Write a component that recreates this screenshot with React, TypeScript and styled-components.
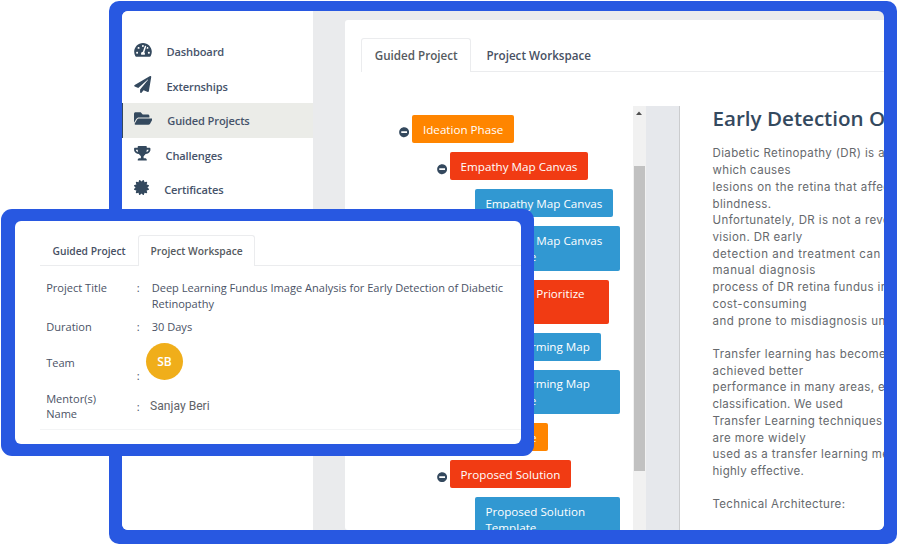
import React from "react";
import styled, { createGlobalStyle } from "styled-components";
import {
  FaCertificate,
  FaFolderOpen,
  FaMinusCircle,
  FaPaperPlane,
  FaTachometerAlt,
  FaTrophy,
} from "react-icons/fa";

const BLUE = "#2858e1";
const NAVY = "#34495e";

const GlobalStyle = createGlobalStyle`
  *, *::before, *::after { box-sizing: border-box; }
  body {
    margin: 0;
    background: #fff;
    font-family: "Open Sans", sans-serif;
    color: ${NAVY};
  }
`;

const Stage = styled.div`
  position: relative;
  width: 897px;
  height: 544px;
  overflow: hidden;
  padding: 0.7px 0 0 109px;
`;

const Device = styled.div`
  width: 788px;
  height: 543.3px;
  padding: 10.3px 12.6px 14px 13px;
  background: ${BLUE};
  border-radius: 10px;
`;

const Screen = styled.div`
  display: flex;
  height: 100%;
  overflow: hidden;
  background: #eaebed;
  border-radius: 6px;
`;

const Sidebar = styled.nav`
  flex: 0 0 191px;
  padding-top: 22.8px;
  background: #fff;
`;

const NavItem = styled.a<{ $active?: boolean; $gap: number }>`
  display: flex;
  align-items: center;
  gap: ${(p) => p.$gap}px;
  height: 34.6px;
  padding-left: ${(p) => (p.$active ? 10.5 : 12)}px;
  border-left: ${(p) => (p.$active ? `1.5px solid ${NAVY}` : "0")};
  background: ${(p) => (p.$active ? "#ebece8" : "transparent")};
  color: #46536a;
  font-size: 11.1px;
  font-weight: 600;
  letter-spacing: -0.14px;
  white-space: nowrap;
`;

const NavIcon = styled.span<{ $size: number; $width: number }>`
  display: flex;
  width: ${(p) => p.$width}px;
  margin-top: -3px;
  color: ${NAVY};
  svg {
    flex: none;
    width: ${(p) => p.$width}px;
    height: ${(p) => p.$size}px;
  }
`;

const NavLabel = styled.span`
  padding-top: 0.8px;
`;

const Content = styled.main`
  display: flex;
  flex-direction: column;
  flex: none;
  width: 560px;
  margin: 9.5px 0 0 32px;
  padding: 17.2px 0 0 16.2px;
  background: #fff;
  border-radius: 3px;
`;

const Tabs = styled.div<{ $small?: boolean }>`
  display: flex;
  flex: none;
  height: ${(p) => (p.$small ? 31 : 34.5)}px;
  box-shadow: inset 0 -1px #ebecee;
  font-size: ${(p) => (p.$small ? 10.28 : 11.65)}px;
  font-weight: 600;
  line-height: ${(p) => (p.$small ? 31 : 34.5)}px;
`;

const Tab = styled.div<{ $active?: boolean; $width: number }>`
  width: ${(p) => p.$width}px;
  border: 1px solid ${(p) => (p.$active ? "#ebecee" : "transparent")};
  border-bottom: 0;
  border-radius: 3px 3px 0 0;
  background: ${(p) => (p.$active ? "#fff" : "transparent")};
  color: ${(p) => (p.$active ? "#555a60" : "#475063")};
  text-align: center;
  white-space: nowrap;
`;

const Workspace = styled.div`
  display: flex;
  flex: 1;
  min-height: 0;
  padding-top: 33.9px;
`;

const Tree = styled.div`
  display: flex;
  flex: 0 0 272px;
  flex-direction: column;
  gap: 9px;
  padding-top: 9.4px;
  overflow: hidden;
`;

const TreeRow = styled.div<{ $level: number }>`
  display: flex;
  flex: none;
  align-items: center;
  gap: 2.9px;
  padding-left: ${(p) => [37.8, 75.4, 113.4][p.$level]}px;
`;

const Toggle = styled.span`
  display: flex;
  padding-top: 6px;
  svg {
    width: 10.3px;
    height: 10.3px;
  }
`;

const tones = { orange: "#ff8500", red: "#f13b13", blue: "#3198d2" };

const Node = styled.div<{ $tone: keyof typeof tones; $width: number; $tall?: boolean }>`
  width: ${(p) => p.$width}px;
  height: ${(p) => (p.$tall ? 44.3 : 28)}px;
  padding: 6.4px 0 0 10.8px;
  border-radius: 2px;
  background: ${(p) => tones[p.$tone]};
  color: #fff;
  font-size: 11.65px;
  line-height: 16.5px;
  white-space: pre;
`;

const ScrollTrack = styled.div`
  display: flex;
  flex: 0 0 12.5px;
  flex-direction: column;
  align-items: center;
  padding-top: 5px;
  background: #f1f1f1;
  svg {
    width: 6px;
    height: 4px;
  }
`;

const ScrollThumb = styled.div`
  width: 11px;
  height: 305px;
  margin-top: 51px;
  background: #c1c1c1;
`;

const Gutter = styled.div`
  flex: 0 0 34px;
  background: #e6e8ec;
  border-right: 1.5px solid #cbccce;
`;

const Article = styled.article`
  flex: 1;
  margin-top: -0.7px;
  padding-left: 32.8px;
  white-space: nowrap;
`;

const Title = styled.h1`
  margin: 0 0 14px;
  color: ${NAVY};
  font-size: 20.6px;
  font-weight: 600;
  line-height: 26px;
`;

const Line = styled.div<{ $track: number }>`
  height: 16.73px;
  color: #66696d;
  font-family: Inter, sans-serif;
  font-size: 11.5px;
  letter-spacing: ${(p) => p.$track}px;
  line-height: 16.73px;
`;

const Overlay = styled.section`
  position: absolute;
  left: 1.4px;
  top: 209.3px;
  width: 532.6px;
  height: 247.2px;
  padding: 12.2px 13.4px 12px 13.8px;
  background: ${BLUE};
  border-radius: 11px;
`;

const OverlayBody = styled.div`
  height: 100%;
  padding: 13.7px 0 0 24.5px;
  background: #fff;
  border-radius: 6px;
`;

const Details = styled.dl`
  display: grid;
  grid-template-columns: 90.5px 15px 1fr;
  grid-template-rows: 46px 32px 39px 45.5px;
  height: 164px;
  margin: 0;
  padding-left: 6.5px;
  border-bottom: 1px solid #f3f4f5;
  color: #4b5366;
  font-size: 11.05px;
  line-height: 15.5px;
`;

const Cell = styled.div<{ $top: number }>`
  padding-top: ${(p) => p.$top}px;
  white-space: pre-line;
`;

const Avatar = styled.div`
  display: flex;
  align-items: center;
  justify-content: center;
  width: 37px;
  height: 37px;
  margin: -1px 0 0 -5.8px;
  border-radius: 50%;
  background: #f0ae1a;
  color: #fff;
  font-size: 12px;
  font-weight: 600;
`;

const Mentor = styled(Cell)`
  margin-left: -1.6px;
  color: #5f6368;
  font-family: Roboto, sans-serif;
  font-size: 12.1px;
`;

const nav = [
  { label: "Dashboard", icon: FaTachometerAlt, size: 15.7, width: 18, gap: 14.5 },
  { label: "Externships", icon: FaPaperPlane, size: 17, width: 17.5, gap: 15 },
  { label: "Guided Projects", icon: FaFolderOpen, size: 17, width: 18.5, gap: 15.3, active: true },
  { label: "Challenges", icon: FaTrophy, size: 14.5, width: 16.5, gap: 15 },
  { label: "Certificates", icon: FaCertificate, size: 15, width: 15, gap: 15.2 },
];

type TreeItem = {
  label: string;
  tone: keyof typeof tones;
  level: number;
  width: number;
  tall?: boolean;
};

const tree: TreeItem[] = [
  { label: "Ideation Phase", tone: "orange", level: 0, width: 102 },
  { label: "Empathy Map Canvas", tone: "red", level: 1, width: 138.5 },
  { label: "Empathy Map Canvas", tone: "blue", level: 2, width: 138.5 },
  { label: "Empathy Map Canvas\nTemplate", tone: "blue", level: 2, width: 145.7, tall: true },
  { label: "Brainstorm & Prioritize\nIdeas", tone: "red", level: 1, width: 159, tall: true },
  { label: "Brainstorming Map", tone: "blue", level: 2, width: 126.3 },
  { label: "Brainstorming Map\nTemplate", tone: "blue", level: 2, width: 145.7, tall: true },
  { label: "Project Design Phase", tone: "orange", level: 0, width: 135.5 },
  { label: "Proposed Solution", tone: "red", level: 1, width: 121.5 },
  { label: "Proposed Solution\nTemplate", tone: "blue", level: 2, width: 145.7, tall: true },
];

const article: [string, number][] = [
  ["Diabetic Retinopathy (DR) is a", 0.37],
  ["which causes", 0.34],
  ["lesions on the retina that affect", 0.43],
  ["blindness.", 0.35],
  ["Unfortunately, DR is not a reversible", 0.4],
  ["vision. DR early", 0.35],
  ["detection and treatment can help", 0.57],
  ["manual diagnosis", 0.56],
  ["process of DR retina fundus images", 0.36],
  ["cost-consuming", 0.45],
  ["and prone to misdiagnosis unlike", 0.48],
  ["", 0],
  ["Transfer learning has become", 0.4],
  ["achieved better", 0.45],
  ["performance in many areas, especially", 0.37],
  ["classification. We used", 0.24],
  ["Transfer Learning techniques", 0.375],
  ["are more widely", 0.45],
  ["used as a transfer learning method", 0.4],
  ["highly effective.", 0.3],
  ["", 0],
  ["Technical Architecture:", 0.33],
];

export default function App() {
  return (
    <>
      <GlobalStyle />
      <Stage>
        <Device>
          <Screen>
            <Sidebar>
              {nav.map(({ label, icon: Icon, size, width, gap, active }) => (
                <NavItem key={label} $active={active} $gap={gap}>
                  <NavIcon $size={size} $width={width}>
                    <Icon />
                  </NavIcon>
                  <NavLabel>{label}</NavLabel>
                </NavItem>
              ))}
            </Sidebar>
            <Content>
              <Tabs>
                <Tab $active $width={110}>Guided Project</Tab>
                <Tab $width={135}>Project Workspace</Tab>
              </Tabs>
              <Workspace>
                <Tree>
                  {tree.map((item, i) => (
                    <TreeRow key={i} $level={item.level}>
                      {item.level < 2 && (
                        <Toggle>
                          <FaMinusCircle />
                        </Toggle>
                      )}
                      <Node $tone={item.tone} $width={item.width} $tall={item.tall}>
                        {item.label}
                      </Node>
                    </TreeRow>
                  ))}
                </Tree>
                <ScrollTrack>
                  <svg viewBox="0 0 6 4">
                    <path d="M0 4 3 0.5 6 4Z" fill="#505050" />
                  </svg>
                  <ScrollThumb />
                </ScrollTrack>
                <Gutter />
                <Article>
                  <Title>Early Detection Of Diabetic</Title>
                  {article.map(([text, track], i) => (
                    <Line key={i} $track={track}>
                      {text}
                    </Line>
                  ))}
                </Article>
              </Workspace>
            </Content>
          </Screen>
        </Device>
        <Overlay>
          <OverlayBody>
            <Tabs $small>
              <Tab $width={98.7}>Guided Project</Tab>
              <Tab $active $width={116.4}>Project Workspace</Tab>
            </Tabs>
            <Details>
              <Cell $top={14.2}>Project Title</Cell>
              <Cell $top={14.2}>:</Cell>
              <Cell $top={14.2}>
                {"Deep Learning Fundus Image Analysis for Early Detection of Diabetic\nRetinopathy"}
              </Cell>
              <Cell $top={7.3}>Duration</Cell>
              <Cell $top={7.3}>:</Cell>
              <Cell $top={7.3}>30 Days</Cell>
              <Cell $top={11}>Team</Cell>
              <Cell $top={23.8}>:</Cell>
              <Avatar>SB</Avatar>
              <Cell $top={7.5}>{"Mentor(s)\nName"}</Cell>
              <Cell $top={16}>:</Cell>
              <Mentor $top={16}>Sanjay Beri</Mentor>
            </Details>
          </OverlayBody>
        </Overlay>
      </Stage>
    </>
  );
}
